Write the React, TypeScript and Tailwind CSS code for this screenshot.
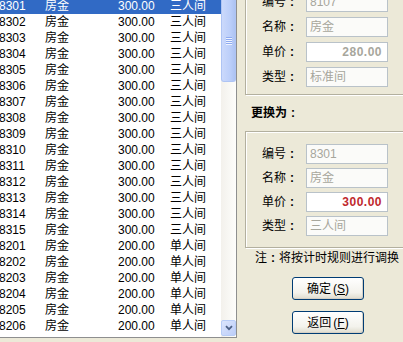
import React from "react";

const rows: [string, string, string, string][] = [
  ...Array.from({ length: 15 }, (_, i) => [String(8301 + i), "房金", "300.00", "三人间"] as [string, string, string, string]),
  ...Array.from({ length: 6 }, (_, i) => [String(8201 + i), "房金", "200.00", "单人间"] as [string, string, string, string]),
];

function Colon() {
  return <span className="mx-[3px] inline-block w-[6px] text-center font-bold">:</span>;
}

function Field({ label, value, tone }: { label: string; value: string; tone?: "price" | "red" }) {
  const text =
    tone === "red"
      ? "justify-end pr-[5px] font-bold text-[#c0282d] tracking-[0.5px]"
      : tone === "price"
        ? "justify-end pr-[5px] font-bold text-[#a7a69c] tracking-[0.5px]"
        : "pl-[3px] text-[#a7a69c]";
  return (
    <div className="flex h-5 items-center">
      <span className="flex w-[44px] items-center text-[12px] text-black">
        {label}
        <Colon />
      </span>
      <div
        className={`flex h-5 w-[82px] items-center border border-[#b9c2c9] ${tone ? "bg-white" : "bg-[#fbfbf9]"} text-[12px] ${text}`}
      >
        {value}
      </div>
    </div>
  );
}

function XpButton({ label, hot }: { label: string; hot: string }) {
  return (
    <button
      type="button"
      className="flex h-[23px] w-[72px] items-center justify-center rounded-[3px] border border-[#003c74] bg-[linear-gradient(#ffffff,#f3f2ec_70%,#dedbcd)] text-[12px] text-black shadow-[inset_-1px_-1px_0_#d6d0c5]"
    >
      {label}
      <span className="ml-[2px]">
        (<u>{hot}</u>)
      </span>
    </button>
  );
}

export default function App() {
  return (
    <div className="flex h-[342px] w-[403px] overflow-hidden bg-[#ece9d8] font-['Liberation_Sans','Noto_Sans_CJK_SC',sans-serif]">
      {/* room list */}
      <div className="flex h-[338px] w-[237px] shrink-0 border-r border-b border-[#8e8f8f] bg-white">
        <div className="-mt-[2px] flex-1 overflow-hidden">
          {rows.map(([id, name, price, type], i) => (
            <div
              key={id}
              className={`flex h-4 items-center text-[12px] ${i === 0 ? "bg-[#316ac5] text-white" : "text-black"}`}
            >
              <span className="-ml-[1px] w-[46px]">{id}</span>
              <span className="w-[73px]">{name}</span>
              <span className="w-[52px]">{price}</span>
              <span>{type}</span>
            </div>
          ))}
        </div>
        <div className="flex w-[15px] flex-col bg-[linear-gradient(90deg,#f3f1ec,#fdfdfb)]">
          <div className="flex h-[82px] items-center justify-center rounded-b-[3px] border border-t-0 border-[#aec4f4] bg-[linear-gradient(90deg,#cbd9fb,#bccffa_60%,#adc3f3)]">
            <div className="flex flex-col gap-[1px]">
              {[0, 1, 2, 3].map((k) => (
                <div key={k} className="h-[1px] w-[6px] bg-[#8eaaf0] shadow-[0_1px_0_#eef3fe]" />
              ))}
            </div>
          </div>
          <div className="flex-1" />
          <div className="mb-[1px] flex h-[16px] items-center justify-center rounded-[2px] border border-[#b8cdf7] bg-[linear-gradient(135deg,#dce6fd,#bccdf8)]">
            <svg width="8" height="6" viewBox="0 0 8 6">
              <path d="M1 1.2 4 4.2 7 1.2" fill="none" stroke="#4d6185" strokeWidth="1.8" />
            </svg>
          </div>
        </div>
      </div>

      {/* details */}
      <div className="flex min-w-0 flex-1 flex-col">
        <div className="-mt-[20px] ml-[8px] w-[170px] shrink-0 border border-[#b3b09f] pt-[11px] pb-[7px] pl-[16px] shadow-[inset_1px_1px_0_#fff,1px_1px_0_#fff]">
          <div className="flex flex-col gap-[5px]">
            <Field label="编号" value="8107" />
            <Field label="名称" value="房金" />
            <Field label="单价" value="280.00" tone="price" />
            <Field label="类型" value="标准间" />
          </div>
        </div>
        <div className="mt-[10px] ml-[14px] flex h-4 items-center text-[12px] font-bold leading-4 text-black">
          更换为
          <Colon />
        </div>
        <div className="mt-[10px] ml-[8px] w-[170px] shrink-0 border border-[#b3b09f] pt-[12px] pb-[11px] pl-[16px] shadow-[inset_1px_1px_0_#fff,1px_1px_0_#fff]">
          <div className="flex flex-col gap-1">
            <Field label="编号" value="8301" />
            <Field label="名称" value="房金" />
            <Field label="单价" value="300.00" tone="red" />
            <Field label="类型" value="三人间" />
          </div>
        </div>
        <div className="mt-[1px] ml-[18px] flex h-[18px] items-center text-[12px] whitespace-nowrap text-black">
          注
          <Colon />
          将按计时规则进行调换
        </div>
        <div className="mt-[10px] ml-[55px] flex flex-col gap-[11px]">
          <XpButton label="确定" hot="S" />
          <XpButton label="返回" hot="F" />
        </div>
      </div>
    </div>
  );
}
